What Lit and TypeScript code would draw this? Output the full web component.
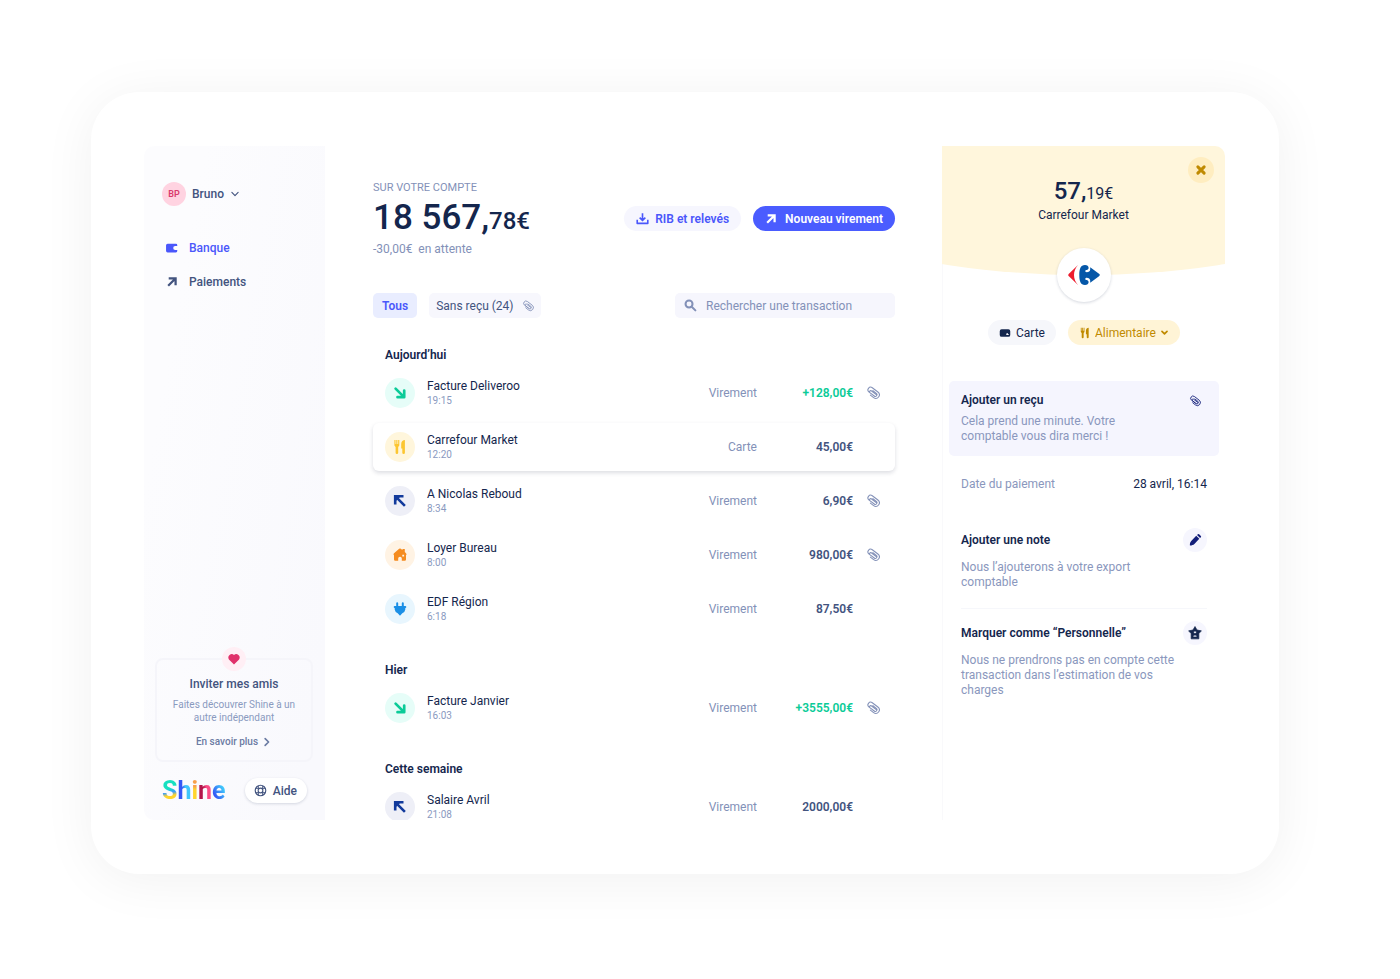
import { LitElement, html, css, svg, nothing } from "lit";
import { customElement, property, state } from "lit/decorators.js";
import { classMap } from "lit/directives/class-map.js";

const shapes: Record<string, unknown> = {
  wallet: svg`<path d="M3 3h9.500A1.500 1.500 0 0 1 14 4.500V5.800h-2.400a2.200 2.200 0 0 0 0 4.400H14v1.300A1.500 1.500 0 0 1 12.500 13H3A1.800 1.800 0 0 1 1.200 11.200v-6.400A1.800 1.800 0 0 1 3 3z"/>`,
  card: svg`<path fill-rule="evenodd" d="M3.500 3h9A2.500 2.500 0 0 1 15 5.500v5a2.500 2.500 0 0 1-2.500 2.500h-9A2.500 2.500 0 0 1 1 10.500v-5A2.500 2.500 0 0 1 3.500 3zM10.800 8.400a1.200 1.200 0 0 0 0 2.400h2.400V9.500h-1.200V8.400z"/>`,
  out: svg`<path d="M3.600 3.200H12.800V12.400M12.300 3.700L2.900 13.100" fill="none" stroke="currentColor" stroke-width="3"/>`,
  arrow: svg`<path d="M3.600 3.600l8 8M12.200 5.500v6.700H5.500" fill="none" stroke="currentColor" stroke-width="2.700" stroke-linecap="round" stroke-linejoin="round"/>`,
  back: svg`<path d="M11.500 3.200H3.200v8.300M3.700 3.700l9.200 9.200" fill="none" stroke="currentColor" stroke-width="2.600"/><path d="M3 3h6L3 9z"/>`,
  fork: svg`<path d="M2.400 1h1.100v4h.8V1h1.100v4h.8V1h1.100v5.500L6.200 8v5.800a1.300 1.300 0 0 1-2.600 0V8L2.400 6.500zM12.900 1v12.800a1.300 1.300 0 0 1-2.600 0V9.500H9.200V5C9.200 2.500 10.900 1 12.900 1z"/>`,
  house: svg`<path fill-rule="evenodd" d="M6.300 2.400a2.400 2.400 0 0 1 3.400 0l.8.700V2h2.300v3L14 6.300a1.300 1.300 0 0 1 0 2V12.500a1.300 1.300 0 0 1-1.300 1.300H9.800v-2.300a1.800 1.800 0 0 0-3.600 0v2.300H3.300A1.300 1.300 0 0 1 2 12.500V8.300a1.300 1.300 0 0 1 0-2zM10.300 7.700v1.800h1.800V7.700z"/>`,
  plug: svg`<path d="M4.200 2.300a1 1 0 0 1 2 0V5h3.600V2.300a1 1 0 0 1 2 0V5h1.500a.9.900 0 0 1 0 2v1.500a4.800 4.800 0 0 1-3 3.800L8 14.800l-2.300-2.500a4.800 4.800 0 0 1-3-3.800V7a1 1 0 0 1 0-2h1.500z"/>`,
  clip: svg`<path d="M8.500 10.800L3.500 7a3.100 3.100 0 0 1 3.700-5l6.400 4.900a4 4 0 0 1-4.900 6.400L5 10.400M11.700 9.900L6 5.500a1.300 1.300 0 0 0-1.600 2l5 3.900a1.900 1.900 0 0 0 2.400-3L7.900 5.300" fill="none" stroke="currentColor" stroke-width="1.200" stroke-linecap="round"/>`,
  search: svg`<g fill="none" stroke="currentColor" stroke-width="2.500" stroke-linecap="round"><circle cx="6.200" cy="6.200" r="4.300"/><path d="M9.800 9.800l4.200 4.200"/></g>`,
  download: svg`<path d="M8 1.500v8.500M4.500 7L8 10.500 11.500 7M1.500 9.500v4.500h13V9.500" fill="none" stroke="currentColor" stroke-width="2" stroke-linejoin="round"/>`,
  down: svg`<path d="M3 5.500l5 5 5-5" fill="none" stroke="currentColor" stroke-width="1.800" stroke-linecap="round" stroke-linejoin="round"/>`,
  boldDown: svg`<path d="M3.500 6L8 10.500 12.500 6" fill="none" stroke="currentColor" stroke-width="3" stroke-linecap="round" stroke-linejoin="round"/>`,
  next: svg`<path d="M5 2.500L10.500 8 5 13.500" fill="none" stroke="currentColor" stroke-width="2.600" stroke-linecap="round" stroke-linejoin="round"/>`,
  close: svg`<path d="M3.800 3.800l8.400 8.400M12.200 3.800l-8.400 8.400" fill="none" stroke="currentColor" stroke-width="4" stroke-linecap="round"/>`,
  heart: svg`<path d="M8 14.300L2.200 8.600A4 4 0 0 1 8 3.300a4 4 0 0 1 5.800 5.300z"/>`,
  buoy: svg`<g fill="none" stroke="currentColor"><circle cx="8" cy="8" r="6.500" stroke-width="1.400"/><circle cx="8" cy="8" r="2.900" stroke-width="1.400"/><path d="M5.300 6.700V2.300M10.700 6.700V2.300M5.300 9.300v4.400M10.700 9.300v4.400M6 5.300H2.300M6 10.700H2.300M10 5.300h3.700M10 10.700h3.700" stroke-width="1.200"/></g>`,
  pencil: svg`<path d="M9.400 3.200l3.500 3.500-5.600 5.900c-1.200 1.200-3.300 1.800-5.100 1.700-.3-1.900.3-4 1.500-5.200zM10.300 2.400l1-.9a1 1 0 0 1 1.400 0l2 2a1 1 0 0 1 0 1.400l-.9.900z"/>`,
  star: svg`<path fill-rule="evenodd" stroke="currentColor" stroke-width=".8" stroke-linejoin="round" d="M8 .6l2.300 4 5 .9-2.900 3.200v6H3.600v-6L.7 5.500l5-.9zM8 5.600a1.600 1.600 0 1 0 0 3.200 1.600 1.600 0 0 0 0-3.200zM5.600 12.600h4.800a2.400 2.400 0 0 0-4.800 0z"/>`,
};

const icon = (name: string, size = 14) =>
  html`<svg class="icon" width=${size} height=${size} viewBox="0 0 16 16" fill="currentColor" aria-hidden="true">${shapes[name]}</svg>`;

const base = css`
  *, :host { box-sizing: border-box; }
  :host { font-family: Roboto, sans-serif; font-size: 12px; line-height: 16px; color: #14264d; }
  button, input, select { font: inherit; color: inherit; border: 0; margin: 0; padding: 0; background: none; }
  button { cursor: pointer; }
  a { color: inherit; text-decoration: none; }
  h1, h2, h3, p, ul { margin: 0; padding: 0; font-size: inherit; font-weight: inherit; list-style: none; }
  .icon { display: block; flex: none; }
`;

@customElement("side-nav")
class SideNav extends LitElement {
  static styles = [base, css`
    :host { display: flex; flex-direction: column; padding: 36px 12px 17px 11px; border-radius: 10px 0 0 10px; color: #43547f; font-weight: 500;
      background: linear-gradient(100deg, #fcfcfe 20%, #f9f9fd 90%); }
    .user { display: flex; align-items: center; gap: 6px; margin-left: 7px; align-self: flex-start; font-weight: 500; }
    .avatar { display: grid; place-items: center; width: 24px; height: 24px; border-radius: 50%; background: #ffd3e1; color: #d93a6c; font-size: 9px; line-height: 12px; font-weight: 600; }
    .nav { display: flex; flex-direction: column; margin: 25px 0 0 7px; }
    .link { display: flex; align-items: center; gap: 7px; height: 34px; }
    .glyph { display: grid; place-items: center; width: 20px; }
    .active { color: #4a57fb; }
    .invite { display: flex; flex-direction: column; align-items: center; margin-top: auto; border: 2px solid #f5f5fa; border-radius: 8px; padding: 0 8px 10px; text-align: center; }
    .heart { display: grid; place-items: center; width: 24px; height: 24px; margin-top: -13px; border-radius: 50%; background: #ffeff5; color: #e0316b; }
    .title { margin-top: 5px; }
    .text { margin-top: 6px; font-size: 10px; line-height: 13px; font-weight: 400; color: #8a9abf; }
    .more { display: flex; align-items: center; gap: 4px; margin-top: 10px; font-size: 10px; color: #6b7ba3; }
    .foot { display: flex; justify-content: space-between; align-items: center; margin: 16px 6px 0 7px; }
    .brand { display: flex; font-size: 25px; line-height: 24px; font-weight: 700; }
    .brand span { color: transparent; background-clip: text; -webkit-background-clip: text; }
    .s { background-image: linear-gradient(170deg, #16e0c0 40%, #3a9cff 55%, #ffd52e 68%); }
    .h { background-image: linear-gradient(90deg, #3557f5 35%, #3fc6fb 60%); }
    .i { background-image: linear-gradient(#f7a04a 30%, #ffd52e 45%); }
    .n { background-image: linear-gradient(90deg, #b3154b 35%, #fb4c86 60%); }
    .e { background-image: linear-gradient(60deg, #3557f5 25%, #3fc6fb 70%); }
    .help { display: flex; align-items: center; gap: 6px; height: 25px; padding: 0 10px 0 9px; border-radius: 13px; background: #fff; box-shadow: 0 1px 3px rgba(20, 38, 77, .16); font-weight: 500; }
  `];
  render() {
    return html`
      <button class="user"><span class="avatar">BP</span>Bruno ${icon("down", 10)}</button>
      <nav class="nav">
        <a class="link active" href="#banque"><span class="glyph">${icon("wallet")}</span>Banque</a>
        <a class="link" href="#paiements"><span class="glyph">${icon("out", 12)}</span>Paiements</a>
      </nav>
      <section class="invite">
        <span class="heart">${icon("heart")}</span>
        <h2 class="title">Inviter mes amis</h2>
        <p class="text">Faites découvrer Shine à un autre indépendant</p>
        <a class="more" href="#inviter">En savoir plus ${icon("next", 10)}</a>
      </section>
      <footer class="foot">
        <div class="brand"><span class="s">S</span><span class="h">h</span><span class="i">i</span><span class="n">n</span><span class="e">e</span></div>
        <button class="help">${icon("buoy", 13)}Aide</button>
      </footer>`;
  }
}

interface Transaction { label: string; time: string; kind: string; amount: string; tone: string; glyph: string; clip?: boolean; }

const groups: { title: string; rows: Transaction[] }[] = [
  { title: "Aujourd’hui", rows: [
    { label: "Facture Deliveroo", time: "19:15", kind: "Virement", amount: "+128,00€", tone: "green", glyph: "arrow", clip: true },
    { label: "Carrefour Market", time: "12:20", kind: "Carte", amount: "45,00€", tone: "yellow", glyph: "fork" },
    { label: "A Nicolas Reboud", time: "8:34", kind: "Virement", amount: "6,90€", tone: "navy", glyph: "back", clip: true },
    { label: "Loyer Bureau", time: "8:00", kind: "Virement", amount: "980,00€", tone: "orange", glyph: "house", clip: true },
    { label: "EDF Région", time: "6:18", kind: "Virement", amount: "87,50€", tone: "blue", glyph: "plug" },
  ] },
  { title: "Hier", rows: [
    { label: "Facture Janvier", time: "16:03", kind: "Virement", amount: "+3555,00€", tone: "green", glyph: "arrow", clip: true },
  ] },
  { title: "Cette semaine", rows: [
    { label: "Salaire Avril", time: "21:08", kind: "Virement", amount: "2000,00€", tone: "navy", glyph: "back" },
  ] },
];

@customElement("transaction-row")
class TransactionRow extends LitElement {
  @property({ attribute: false }) item!: Transaction;
  @property({ type: Boolean, reflect: true }) selected = false;
  static styles = [base, css`
    :host { display: block; border-radius: 6px; }
    :host([selected]) { background: #fff; box-shadow: 0 2px 4px rgba(20, 30, 60, .15); }
    .row { display: flex; align-items: center; width: 100%; height: 48px; padding: 0 15px 0 12px; text-align: left; }
    .badge { display: grid; place-items: center; width: 30px; height: 30px; margin-right: 12px; border-radius: 50%; }
    .green { background: #e6fdf8; color: #0bcb98; }
    .yellow { background: #fff6dc; color: #fcc630; }
    .navy { background: #eeeff7; color: #123a9c; }
    .orange { background: #fff3e4; color: #f58c20; }
    .blue { background: #e8f6fe; color: #1b8fe6; }
    .name { flex: 1; display: flex; flex-direction: column; }
    .time { font-size: 10px; line-height: 14px; color: #8a9abf; }
    .kind { color: #8391b8; }
    .amount { width: 96px; text-align: right; font-weight: 600; color: #43547f; }
    .gain { color: #0bcb98; }
    .clip { display: flex; justify-content: flex-end; width: 27px; color: #8391b8; }
  `];
  render() {
    const t = this.item;
    return html`<button class="row">
      <span class="badge ${t.tone}">${icon(t.glyph, 16)}</span>
      <span class="name"><span>${t.label}</span><span class="time">${t.time}</span></span>
      <span class="kind">${t.kind}</span>
      <span class=${classMap({ amount: true, gain: t.amount.startsWith("+") })}>${t.amount}</span>
      <span class="clip">${t.clip ? icon("clip") : nothing}</span>
    </button>`;
  }
}

@customElement("account-view")
class AccountView extends LitElement {
  @state() private selected = "Carrefour Market";
  static styles = [base, css`
    :host { display: block; min-width: 0; padding: 36px 47px 0 48px; }
    .head { display: flex; justify-content: space-between; align-items: flex-start; }
    .label { font-size: 11px; line-height: 12px; color: #8391b8; }
    .balance { margin-top: 4px; font-size: 35px; line-height: 40px; font-weight: 500; color: #14264d; }
    .cents { font-size: 24px; line-height: 24px; }
    .pending { margin-top: 3px; color: #8391b8; white-space: pre; }
    .actions { display: flex; gap: 12px; margin-top: 24px; }
    .action { display: flex; align-items: center; height: 25px; padding: 0 12px; gap: 6px; border-radius: 13px; background: #f6f6fe; color: #4a57fb; font-weight: 600; white-space: nowrap; }
    .primary { background: #4a5cff; color: #fff; gap: 8px; }
    .filters { display: flex; gap: 12px; margin: 36px 0 29px; }
    .filter { display: flex; align-items: center; gap: 8px; height: 25px; padding: 0 7px; border-radius: 5px; background: #f7f7fd; color: #43547f; }
    .on { padding: 0 9px; background: #e9edff; color: #4a57fb; font-weight: 600; }
    .search { display: flex; align-items: center; gap: 9px; width: 220px; height: 25px; margin-left: auto; padding: 0 9px; border-radius: 5px; background: #f6f6fd; color: #8391b8; }
    .field { flex: 1; min-width: 0; outline: none; }
    .field::placeholder { color: #8391b8; opacity: 1; }
    .soft { color: #8391b8; display: block; }
    .groups { display: flex; flex-direction: column; gap: 29px; }
    .list { display: flex; flex-direction: column; gap: 6px; }
    .day { padding-left: 12px; font-weight: 600; }
  `];
  render() {
    return html`
      <header class="head">
        <div>
          <p class="label">SUR VOTRE COMPTE</p>
          <h1 class="balance">18 567,<span class="cents">78€</span></h1>
          <p class="pending">-30,00€  en attente</p>
        </div>
        <div class="actions">
          <button class="action">${icon("download", 13)}RIB et relevés</button>
          <button class="action primary">${icon("out", 12)}Nouveau virement</button>
        </div>
      </header>
      <div class="filters">
        <button class="filter on">Tous</button>
        <button class="filter">Sans reçu (24)<span class="soft">${icon("clip", 12)}</span></button>
        <label class="search">${icon("search", 13)}<input class="field" type="search" aria-label="Rechercher une transaction" placeholder="Rechercher une transaction"></label>
      </div>
      <div class="groups">
        ${groups.map((g) => html`<section class="list">
          <h2 class="day">${g.title}</h2>
          ${g.rows.map((r) => html`<transaction-row .item=${r} ?selected=${r.label === this.selected} @click=${() => (this.selected = r.label)}></transaction-row>`)}
        </section>`)}
      </div>`;
  }
}

@customElement("transaction-detail")
class TransactionDetail extends LitElement {
  static styles = [base, css`
    :host { display: flex; flex-direction: column; position: relative; border-left: 1px solid #f9f9fb; }
    .hero { height: 129px; margin-left: -1px; padding-top: 30px; border-radius: 0 10px 0 0; background: #fff6dc; text-align: center; clip-path: ellipse(124% 100% at 50% 0); }
    .sum { font-size: 24px; line-height: 30px; font-weight: 500; }
    .cents { font-size: 16px; line-height: 16px; font-weight: 400; }
    .shop { margin-top: 1px; }
    .close { position: absolute; top: 11px; right: 11px; display: grid; place-items: center; width: 26px; height: 26px; border-radius: 50%; background: #ffedc0; color: #c08a00; }
    .logo { display: grid; place-items: center; width: 54px; height: 54px; margin: -27px auto 0; border-radius: 50%; background: #fff; box-shadow: 0 1px 3px rgba(20, 38, 77, .18); z-index: 1; }
    .chips { display: flex; justify-content: center; gap: 12px; margin-top: 18px; }
    .chip { display: flex; align-items: center; gap: 5px; height: 25px; padding: 0 11px; border-radius: 13px; background: #f6f7fb; }
    .category { gap: 4px; background: #fff4d6; color: #c08a00; }
    .select { appearance: none; outline: none; }
    .receipt { display: flex; justify-content: space-between; margin: 36px 6px 0; padding: 11px 18px 12px 12px; border-radius: 5px; background: #f5f5fe; text-align: left; }
    .receipt .copy { margin-top: 6px; }
    .pin { display: block; margin-top: 3px; color: #14207a; }
    .body { padding: 0 18px; }
    .title { font-weight: 600; display: block; }
    .copy { display: block; line-height: 15px; color: #8a97bd; }
    .date { display: flex; justify-content: space-between; margin-top: 20px; }
    .muted { color: #8a97bd; }
    .item { padding-bottom: 18px; }
    .note { margin-top: 36px; border-bottom: 1px solid #f6f7fb; }
    .perso { padding-top: 12px; }
    .bar { display: flex; justify-content: space-between; align-items: center; margin-bottom: 8px; }
    .round { display: grid; place-items: center; width: 24px; height: 24px; border-radius: 50%; background: #f6f6fe; color: #14207a; }
    .dark { color: #14264d; }
    .narrow { max-width: 190px; }
    .wide { max-width: 222px; }
  `];
  render() {
    return html`
      <header class="hero">
        <p class="sum">57,<span class="cents">19€</span></p>
        <p class="shop">Carrefour Market</p>
      </header>
      <button class="close" aria-label="Fermer">${icon("close", 12)}</button>
      <div class="logo">
        <svg width="32" height="22" viewBox="0 0 32 22" aria-hidden="true">
          <path d="M10 1L.9 9.700a1.800 1.800 0 0 0 0 2.600L10 21C7.500 18 6 15 6 11S7.500 4 10 1z" fill="#ed1c2e"/>
          <path d="M17 1C12.500 1 11.300 5 11.300 11S12.500 21 17 21c2.200 0 3.600-1.200 3.600-2.800 0-1.300-.9-2.100-1.900-2.200-1 0-1.400-.5-1.400-1.100 0-.8.600-1.200 1.400-1.200 1.900 0 3.500 1.100 3.500 2.800v2.300L31 12.200a1.500 1.500 0 0 0 0-2.400L22.200 3.200V5.500c0 1.700-1.600 2.800-3.500 2.800-.8 0-1.400-.4-1.400-1.200 0-.6.4-1.100 1.400-1.100 1-.1 1.900-.9 1.900-2.200C20.600 2.200 19.200 1 17 1z" fill="#0557a8"/>
        </svg>
      </div>
      <div class="chips">
        <span class="chip">${icon("card", 12)}Carte</span>
        <label class="chip category">${icon("fork", 12)}<select class="select" aria-label="Catégorie"><option>Alimentaire</option></select>${icon("boldDown", 9)}</label>
      </div>
      <button class="receipt">
        <span><span class="title">Ajouter un reçu</span><span class="copy narrow">Cela prend une minute. Votre comptable vous dira merci !</span></span>
        <span class="pin">${icon("clip", 12)}</span>
      </button>
      <div class="body">
        <p class="date"><span class="muted">Date du paiement</span><span>28 avril, 16:14</span></p>
        <section class="item note">
          <div class="bar"><h3 class="title">Ajouter une note</h3><button class="round" aria-label="Modifier la note">${icon("pencil")}</button></div>
          <p class="copy narrow">Nous l’ajouterons à votre export comptable</p>
        </section>
        <section class="item perso">
          <div class="bar"><h3 class="title">Marquer comme “Personnelle”</h3><button class="round dark" aria-label="Marquer comme personnelle">${icon("star")}</button></div>
          <p class="copy wide">Nous ne prendrons pas en compte cette transaction dans l’estimation de vos charges</p>
        </section>
      </div>`;
  }
}

@customElement("app-root")
class AppRoot extends LitElement {
  static styles = [base, css`
    :host { display: flex; height: 100vh; padding: 92px 121px 105px 91px; background: #fff; }
    .frame { flex: 1; display: flex; min-width: 0; padding: 54px 54px 54px 53px; border-radius: 48px; background: #fff; box-shadow: 0 6px 54px rgba(0, 0, 0, .06); }
    .app { flex: 1; display: grid; grid-template-columns: 181px minmax(0, 1fr) 283px; grid-template-rows: minmax(0, 1fr); min-width: 0; overflow: hidden; }
  `];
  render() {
    return html`<div class="frame"><main class="app">
      <side-nav></side-nav><account-view></account-view><transaction-detail></transaction-detail>
    </main></div>`;
  }
}
